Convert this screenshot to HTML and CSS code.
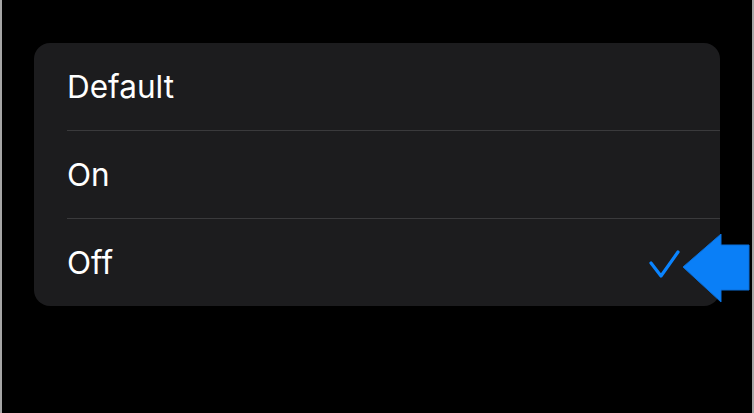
FILE: index.html
```html
<!DOCTYPE html>
<html lang="en">
<head>
    <meta charset="UTF-8">
    <meta name="viewport" content="width=device-width, initial-scale=1.0">
    <title>Options</title>
    <link rel="stylesheet" href="styles.css">
</head>
<body>
    <div class="screen">
        <ul class="option-list">
            <li class="option">Default</li>
            <li class="option">On</li>
            <li class="option selected">
                <span>Off</span>
                <svg class="check" width="32" height="30" viewBox="0 0 32 30">
                    <path d="M3 14 L13 27 L30 3" fill="none" stroke="#0a84ff" stroke-width="3.2" stroke-linecap="round" stroke-linejoin="round"/>
                </svg>
            </li>
        </ul>

        <svg class="pointer" width="68" height="70" viewBox="0 0 68 70">
            <path d="M0 33 L38 0 L38 11 L66 11 L66 56 L38 56 L38 68 Z" fill="#0a7ff7" stroke="#0a6fd8" stroke-width="1"/>
        </svg>
    </div>
</body>
</html>
```

FILE: styles.css
```css
body {
    margin: 0;
    padding: 0;
    background-color: #000;
    font-family: Inter, 'Liberation Sans', sans-serif;
}

.screen {
    position: relative;
    height: 413px;
    box-sizing: border-box;
    border-left: 2px solid #a6a6a6;
    border-right: 2px solid #a6a6a6;
    padding: 43px 32px 0;
}

.option-list {
    list-style: none;
    margin: 0;
    padding: 0 0 0 33px;
    background-color: #1c1c1e;
    border-radius: 16px;
}

.option {
    height: 87px;
    display: flex;
    align-items: center;
    justify-content: space-between;
    padding-right: 40px;
    color: #fff;
    font-size: 31.5px;
    border-bottom: 1px solid #3a3a3c;
}

.option:last-child {
    border-bottom: none;
}

.check {
    display: block;
    margin-top: 2px;
}

.pointer {
    position: absolute;
    left: 681px;
    top: 234px;
}
```
